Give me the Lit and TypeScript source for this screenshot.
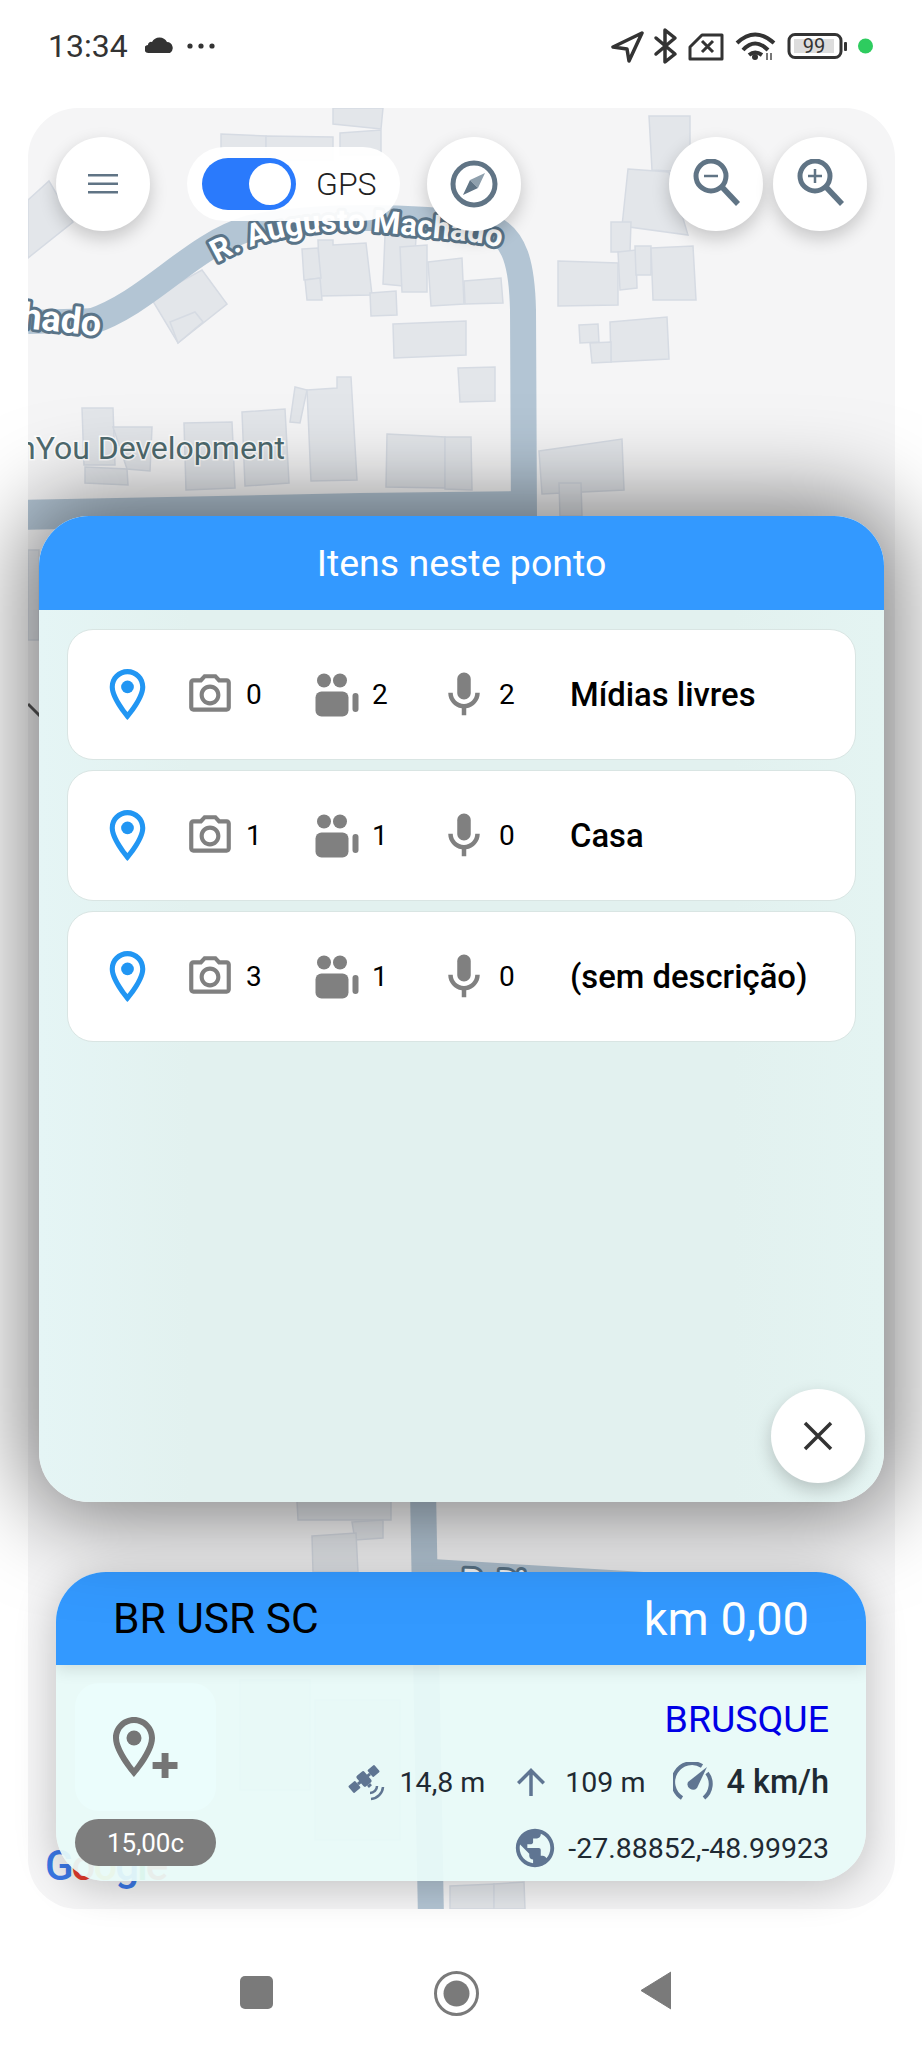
import { LitElement, html, css, svg } from "lit";
import { customElement, property } from "lit/decorators.js";

const PIN =
  "M12 2C8.13 2 5 5.13 5 9c0 5.25 7 13 7 13s7-7.75 7-13c0-3.87-3.13-7-7-7zM7 9c0-2.76 2.24-5 5-5s5 2.24 5 5c0 2.88-2.88 7.19-5 9.88C9.92 16.21 7 11.85 7 9z";

// building footprints, in page coordinates
const BUILDINGS = [
  "333,108 383,108 381,129 333,124",
  "221,134 266,136 266,160 221,160",
  "266,136 333,137 333,160 266,160",
  "340,133 381,130 381,155 340,155",
  "28,200 49,181 73,222 28,258",
  "318,240 333,240 333,245 366,243 372,295 320,296",
  "302,249 318,248 321,278 304,280",
  "305,280 320,278 322,300 307,300",
  "385,235 416,238 413,287 383,284",
  "400,247 427,245 427,292 402,292",
  "428,262 462,258 464,304 431,306",
  "464,281 501,278 503,303 465,304",
  "370,293 396,291 397,315 371,316",
  "393,324 466,321 466,355 394,358",
  "458,368 495,367 495,401 460,402",
  "151,298 202,270 227,304 178,343",
  "170,322 195,312 203,322 178,343",
  "82,408 113,408 115,465 84,465",
  "85,467 127,469 128,485 85,483",
  "113,427 152,427 150,471 127,469",
  "184,423 232,422 235,488 186,490",
  "242,412 285,409 289,483 245,486",
  "290,422 295,387 307,390 300,423",
  "307,390 337,388 337,377 351,377 357,480 311,481",
  "387,434 445,437 445,488 386,487",
  "445,437 471,437 472,490 445,489",
  "539,451 622,439 624,490 542,494",
  "559,483 581,483 582,516 560,516",
  "649,116 690,116 690,172 652,170",
  "628,169 669,172 688,235 622,226",
  "611,222 631,222 630,252 611,252",
  "618,252 636,250 637,288 620,290",
  "635,246 651,246 651,275 636,275",
  "651,248 693,246 696,300 653,300",
  "558,261 618,263 618,305 558,306",
  "610,322 667,317 669,359 611,362",
  "579,325 598,324 599,342 580,343",
  "590,343 611,342 611,362 592,363",
  "28,550 39,550 39,640 28,640",
  "297,1501 391,1501 391,1520 298,1520",
  "352,1522 383,1520 383,1538 355,1540",
  "312,1536 356,1533 358,1572 313,1572",
  "450,1886 494,1884 494,1909 450,1909",
  "494,1884 524,1882 525,1909 494,1909",
  "240,1680 310,1680 310,1790 240,1790",
  "315,1700 400,1700 400,1840 315,1840",
];

const ROWS = [
  { photos: 0, videos: 2, audios: 2, name: "Mídias livres" },
  { photos: 1, videos: 1, audios: 0, name: "Casa" },
  { photos: 3, videos: 1, audios: 0, name: "(sem descrição)" },
];

@customElement("point-row")
export class PointRow extends LitElement {
  static styles = css`
    :host {
      display: grid;
      grid-template-columns: 117px 130px 122px 133px 1fr;
      align-items: center;
      height: 131px;
      box-sizing: border-box;
      background: #fff;
      border: 1px solid #d9e5e3;
      border-radius: 26px;
      font-family: Roboto, sans-serif;
      color: #000;
    }
    .pin {
      width: 61px;
      height: 61px;
      margin-left: 29px;
      fill: #2196f3;
    }
    .cell {
      display: flex;
      align-items: center;
      font-size: 28px;
    }
    .cell svg {
      fill: #808080;
      flex: none;
    }
    .name {
      font-size: 32.8px;
      font-weight: 500;
      white-space: nowrap;
    }
  `;

  @property({ type: Number }) photos = 0;
  @property({ type: Number }) videos = 0;
  @property({ type: Number }) audios = 0;
  @property() name = "";

  render() {
    return html`
      <svg class="pin" viewBox="0 0 24 24"><path d=${PIN}></path><circle cx="12" cy="9" r="2.5"></circle></svg>
      <div class="cell">
        <svg width="50" height="50" viewBox="0 0 24 24" style="margin-right:11px">
          <path d="M14.12 4l1.83 2H20v12H4V6h4.05l1.83-2h4.24M15 2H9L7.17 4H4c-1.1 0-2 .9-2 2v12c0 1.1.9 2 2 2h16c1.1 0 2-.9 2-2V6c0-1.1-.9-2-2-2h-3.17L15 2zm-3 7c1.65 0 3 1.35 3 3s-1.35 3-3 3-3-1.35-3-3 1.35-3 3-3m0-2c-2.76 0-5 2.24-5 5s2.24 5 5 5 5-2.24 5-5-2.24-5-5-5z"></path>
        </svg>
        ${this.photos}
      </div>
      <div class="cell">
        <svg width="44" height="44" viewBox="0 0 44 44" style="margin-right:13px">
          <circle cx="9" cy="7.5" r="7"></circle>
          <circle cx="25" cy="7.5" r="7"></circle>
          <rect x="0.5" y="18.5" width="33" height="25" rx="6"></rect>
          <rect x="37.5" y="20" width="6" height="19" rx="3"></rect>
        </svg>
        ${this.videos}
      </div>
      <div class="cell">
        <svg width="54" height="54" viewBox="0 0 24 24" style="margin-right:8px">
          <path d="M12 14c1.66 0 3-1.34 3-3V5c0-1.66-1.34-3-3-3S9 3.34 9 5v6c0 1.66 1.34 3 3 3z"></path>
          <path d="M17 11c0 2.76-2.24 5-5 5s-5-2.24-5-5H5c0 3.53 2.61 6.43 6 6.92V21h2v-3.08c3.39-.49 6-3.39 6-6.92h-2z"></path>
        </svg>
        ${this.audios}
      </div>
      <div class="name">${this.name}</div>
    `;
  }
}

@customElement("app-root")
export class AppRoot extends LitElement {
  static styles = css`
    :host {
      display: block;
      width: 922px;
      height: 2048px;
      overflow: hidden;
      background: #fff;
      font-family: Roboto, sans-serif;
    }
    .status {
      height: 108px;
      box-sizing: border-box;
      padding: 26px 49px 0 48px;
      display: flex;
      align-items: flex-start;
      color: #333;
    }
    .time {
      font-size: 32px;
      line-height: 40px;
    }
    .cloud {
      margin-left: 17px;
    }
    .more {
      margin-left: 13px;
    }
    .status-right {
      margin-left: auto;
      margin-right: -2px;
    }
    .stage {
      position: relative;
      margin: 0 27px 0 28px;
      height: 1801px;
    }
    .map {
      position: absolute;
      inset: 0;
      border-radius: 50px;
      overflow: hidden;
      background: #f5f5f6;
    }
    .map svg {
      display: block;
    }
    .controls {
      position: absolute;
      top: 29px;
      left: 28px;
      right: 28px;
      display: flex;
      align-items: center;
    }
    .round {
      width: 94px;
      height: 94px;
      border-radius: 50%;
      background: #fff;
      box-shadow: 0 7px 18px rgba(0, 0, 0, 0.2);
      display: flex;
      align-items: center;
      justify-content: center;
      flex: none;
    }
    .gps {
      margin: 0 27px 0 37px;
      width: 213px;
      height: 74px;
      box-sizing: border-box;
      padding-left: 15px;
      border-radius: 37px;
      background: rgba(255, 255, 255, 0.95);
      display: flex;
      align-items: center;
      font-size: 32px;
      font-weight: 300;
      color: #222;
    }
    .track {
      width: 94px;
      height: 52px;
      border-radius: 26px;
      background: #2a7afc;
      display: flex;
      justify-content: flex-end;
      align-items: center;
      padding-right: 5px;
      box-sizing: border-box;
      margin-right: 20px;
    }
    .knob {
      width: 42px;
      height: 42px;
      border-radius: 50%;
      background: #fff;
    }
    .spacer {
      flex: 1;
    }
    .zoom-in {
      margin-left: 10px;
    }
    .panel {
      position: absolute;
      left: 28px;
      top: 1464px;
      width: 810px;
      height: 309px;
      border-radius: 50px;
      overflow: hidden;
      display: flex;
      flex-direction: column;
      background: rgba(232, 250, 248, 0.94);
    }
    .panel-shadow {
      position: absolute;
      left: 28px;
      top: 1464px;
      width: 810px;
      height: 309px;
      border-radius: 50px;
      box-shadow: 0 6px 40px rgba(0, 0, 0, 0.22);
    }
    .panel-head {
      height: 93px;
      flex: none;
      box-sizing: border-box;
      padding: 0 57px;
      display: flex;
      align-items: center;
      justify-content: space-between;
      background: #3399ff;
      box-shadow: 0 4px 16px rgba(0, 0, 0, 0.12);
      position: relative;
    }
    .code {
      font-size: 42.5px;
      color: #000;
    }
    .km {
      font-size: 47px;
      color: #fff;
    }
    .panel-body {
      flex: 1;
      display: flex;
      padding: 18px 37px 14px 19px;
    }
    .side {
      width: 141px;
      display: flex;
      flex-direction: column;
      gap: 8px;
      flex: none;
    }
    .tile {
      height: 128px;
      border-radius: 24px;
      background: #ebfdfc;
      display: flex;
      align-items: center;
      justify-content: center;
    }
    .price {
      height: 47px;
      border-radius: 24px;
      background: #7d7d7d;
      color: #fff;
      font-size: 26px;
      display: flex;
      align-items: center;
      justify-content: center;
    }
    .info {
      flex: 1;
      display: flex;
      flex-direction: column;
      align-items: flex-end;
      color: #1f2a33;
      font-size: 28.5px;
    }
    .city {
      font-size: 37.5px;
      color: #0000e6;
      line-height: 50px;
      height: 50px;
      margin-top: 11px;
    }
    .stats,
    .coords {
      display: flex;
      align-items: center;
    }
    .stats {
      margin-top: 15px;
      height: 46px;
    }
    .coords {
      margin-top: 20px;
      height: 46px;
    }
    .info svg {
      fill: #5f7592;
      flex: none;
    }
    .speed {
      font-size: 32.5px;
      font-weight: 500;
    }
    .dialog {
      position: absolute;
      left: 11px;
      top: 408px;
      width: 845px;
      height: 986px;
      box-sizing: border-box;
      border-radius: 50px;
      background: linear-gradient(to right, #e5f5f5, #e2f1ef 18%, #e2f1ef 82%, #e4f4f2);
      box-shadow: 0 0 90px 14px rgba(0, 0, 0, 0.5);
    }
    .dialog-head {
      height: 94px;
      border-radius: 50px 50px 0 0;
      background: #3399ff;
      color: #fff;
      font-size: 37.5px;
      display: flex;
      align-items: center;
      justify-content: center;
    }
    .rows {
      display: flex;
      flex-direction: column;
      gap: 10px;
      padding: 19px 28px 0;
    }
    .close {
      position: absolute;
      right: 19px;
      bottom: 19px;
    }
    .nav {
      height: 139px;
      box-sizing: border-box;
      padding: 64px 12px 0 0;
      display: flex;
      justify-content: center;
      align-items: flex-start;
      gap: 161px;
    }
    .square {
      width: 33px;
      height: 33px;
      margin-top: 3px;
      border-radius: 5px;
      background: #7a7a7a;
    }
    .home {
      margin-top: -2px;
    }
    .back {
      margin-top: -2px;
    }
  `;

  private renderMap() {
    return html`
      <svg width="867" height="1801" viewBox="28 108 867 1801">
        <defs>
          <path id="street" d="M217 263 C267 234 325 226 397 234 S483 240 517 254"></path>
        </defs>
        <g fill="#e3e6ea" stroke="#d6dbe3" stroke-width="1.5">
          ${BUILDINGS.map((p) => svg`<polygon points=${p}></polygon>`)}
        </g>
        <g fill="none" stroke="#b3c5d4">
          <path stroke-width="26" d="M90 322 C150 302 190 246 250 228 C330 212 440 218 490 227 C515 237 522 265 523 310 L524 520"></path>
          <path stroke-width="30" d="M20 515 L360 508 L524 506"></path>
          <path stroke-width="26" d="M423 1490 L431 1920"></path>
          <path stroke-width="14" d="M432 1566 L660 1580"></path>
          <path stroke-width="24" d="M28 322 L100 320"></path>
          <path stroke-width="3" stroke="#555" d="M28 704 L40 716"></path>
        </g>
        <g font-family="Roboto, sans-serif" font-weight="700" font-size="31" fill="#fff" stroke="#5a7488" stroke-width="6" paint-order="stroke" stroke-linejoin="round">
          <text><textPath href="#street">R. Augusto Machado</textPath></text>
          <text x="100" y="336" font-size="36" text-anchor="end" transform="rotate(6 100 336)">Machado</text>
          <text x="462" y="1590" font-size="30" transform="rotate(2 462 1590)">R. Dig</text>
        </g>
        <text x="285" y="459" text-anchor="end" font-family="Roboto, sans-serif" font-size="32" fill="#4f6b6f" stroke="#fff" stroke-width="3" paint-order="stroke">nYou Development</text>
        <text x="45" y="1880" letter-spacing="-2" font-family="Roboto, sans-serif" font-weight="500" font-size="42">
          <tspan fill="#3b78e7">G</tspan><tspan fill="#e33b2e">o</tspan><tspan fill="#f5bd1f">o</tspan><tspan fill="#3b78e7">g</tspan><tspan fill="#2ca24c">l</tspan><tspan fill="#e33b2e">e</tspan>
        </text>
      </svg>
    `;
  }

  private renderStatus() {
    return html`
      <div class="status">
        <span class="time">13:34</span>
        <svg class="cloud" width="29" height="40" viewBox="0 0 29 40" fill="#333">
          <path d="M4 27a4 4 0 0 1-1-8 3 3 0 0 1 4-3 8.500 8.500 0 0 1 15 0 6 6 0 0 1 3 11z"></path>
        </svg>
        <svg class="more" width="28" height="40" viewBox="0 0 28 40" fill="#333">
          <circle cx="3" cy="20" r="2.600"></circle>
          <circle cx="14" cy="20" r="2.600"></circle>
          <circle cx="25" cy="20" r="2.600"></circle>
        </svg>
        <svg class="status-right" width="264" height="40" viewBox="611 26 264 40" fill="none" stroke="#333" stroke-width="3.500">
          <path stroke-linejoin="round" d="M642 33 L613 47 L627 49 L629 61 Z"></path>
          <path stroke-linecap="round" stroke-linejoin="round" d="M656 38 L675 54 L665 62 V30 L675 38 L656 54"></path>
          <path stroke-linejoin="round" stroke-width="3" d="M690 59 V47 L702 35 H722 V59 Z"></path>
          <path stroke-width="3" d="M702 41 L713 52 M713 41 L702 52"></path>
          <path stroke-width="4" d="M737 43 Q755 26 774 43 M743 50 Q755 37 768 50 M749 55 Q755 50 762 55"></path>
          <circle cx="755" cy="57" r="3" fill="#333" stroke="none"></circle>
          <path stroke-width="2" stroke="#777" d="M767 53 V60 M771 53 V60"></path>
          <rect x="789" y="34.500" width="52" height="23" rx="6" stroke-width="3"></rect>
          <rect x="794" y="39" width="40" height="14" fill="#ddd" stroke="none"></rect>
          <rect x="844" y="42" width="3" height="9" rx="1" fill="#333" stroke="none"></rect>
          <text x="814" y="53" text-anchor="middle" font-family="Roboto, sans-serif" font-size="20" fill="#333" stroke="none">99</text>
          <circle cx="865.500" cy="46" r="7.500" fill="#2ecc5f" stroke="none"></circle>
        </svg>
      </div>
    `;
  }

  private renderControls() {
    const lens = "fill:none;stroke:#607485";
    return html`
      <div class="controls">
        <div class="round">
          <svg width="30" height="22" viewBox="0 0 30 22" fill="#607485">
            <rect y="1" width="30" height="2.500"></rect>
            <rect y="9.500" width="30" height="2.500"></rect>
            <rect y="18" width="30" height="2.500"></rect>
          </svg>
        </div>
        <div class="gps">
          <div class="track"><div class="knob"></div></div>
          GPS
        </div>
        <div class="round">
          <svg width="50" height="50" viewBox="0 0 50 50">
            <circle cx="25" cy="25" r="21" style=${lens} stroke-width="5"></circle>
            <path d="M36 14 L29 29 L21 21 Z" fill="#8fa0ad"></path>
            <path d="M14 36 L21 21 L29 29 Z" fill="#607485"></path>
          </svg>
        </div>
        <div class="spacer"></div>
        <div class="round">
          <svg width="50" height="50" viewBox="0 0 50 50" style="margin-left:2px">
            <circle cx="19" cy="17" r="15" style=${lens} stroke-width="5"></circle>
            <path d="M30 28 L46 45" style=${lens} stroke-width="5.500"></path>
            <path d="M12 17 H26" style=${lens} stroke-width="2.500"></path>
          </svg>
        </div>
        <div class="round zoom-in">
          <svg width="50" height="50" viewBox="0 0 50 50" style="margin-left:2px">
            <circle cx="19" cy="17" r="15" style=${lens} stroke-width="5"></circle>
            <path d="M30 28 L46 45" style=${lens} stroke-width="5.500"></path>
            <path d="M12 17 H26 M19 10 V24" style=${lens} stroke-width="2.500"></path>
          </svg>
        </div>
      </div>
    `;
  }

  private renderPanel() {
    return html`
      <div class="panel-shadow"></div>
      <div class="panel">
        <div class="panel-head">
          <span class="code">BR USR SC</span>
          <span class="km">km 0,00</span>
        </div>
        <div class="panel-body">
          <div class="side">
            <div class="tile">
              <svg width="96" height="72" viewBox="0 0 32 24" fill="#757575">
                <path d=${PIN}></path>
                <circle cx="12" cy="9" r="2.500"></circle>
                <path d="M21.200 14 H23.500 V17 H26.500 V19.300 H23.500 V22.300 H21.200 V19.300 H18.200 V17 H21.200 Z"></path>
              </svg>
            </div>
            <div class="price">15,00c</div>
          </div>
          <div class="info">
            <div class="city">BRUSQUE</div>
            <div class="stats">
              <svg width="40" height="40" viewBox="0 0 40 40" style="margin-right:13px">
                <g transform="rotate(-40 17 17)">
                  <rect x="0" y="12.500" width="9" height="9" rx="1"></rect>
                  <rect x="25" y="12.500" width="9" height="9" rx="1"></rect>
                  <rect x="9" y="15.500" width="16" height="3"></rect>
                  <rect x="12" y="10" width="10" height="14" rx="2"></rect>
                  <rect x="15" y="24" width="4" height="3"></rect>
                </g>
                <path d="M24 37 A13 13 0 0 0 36 25 M23 31 A7 7 0 0 0 30 24" fill="none" stroke="#5f7592" stroke-width="2.500"></path>
              </svg>
              <span>14,8 m</span>
              <svg width="42" height="42" viewBox="0 0 24 24" style="margin:0 13px 0 25px">
                <path d="M4 12l1.410 1.410L11 7.830V20h2V7.830l5.580 5.590L20 12l-8-8-8 8z"></path>
              </svg>
              <span>109 m</span>
              <svg width="40" height="40" viewBox="0 0 40 40" style="margin:0 13px 0 28px">
                <path d="M9 36 A18 18 0 0 1 29 4" fill="none" stroke="#5f7592" stroke-width="4"></path>
                <path d="M34 11 A18 18 0 0 1 31 36" fill="none" stroke="#5f7592" stroke-width="4"></path>
                <path d="M34 5 L24 26 A5.500 5.500 0 0 1 15 20 Z"></path>
              </svg>
              <span class="speed">4 km/h</span>
            </div>
            <div class="coords">
              <svg width="46" height="46" viewBox="0 0 24 24" style="margin-right:10px">
                <path d="M12 2C6.480 2 2 6.480 2 12s4.480 10 10 10 10-4.480 10-10S17.520 2 12 2zm-1 17.930c-3.950-.490-7-3.850-7-7.930 0-.620.080-1.210.210-1.790L9 15v1c0 1.100.900 2 2 2v1.930zm6.900-2.540c-.260-.810-1-1.390-1.900-1.390h-1v-3c0-.550-.450-1-1-1H8v-2h2c.550 0 1-.450 1-1V7h2c1.100 0 2-.900 2-2v-.410c2.930 1.190 5 4.060 5 7.410 0 2.080-.800 3.970-2.100 5.390z"></path>
              </svg>
              <span>-27.88852,-48.99923</span>
            </div>
          </div>
        </div>
      </div>
    `;
  }

  render() {
    return html`
      ${this.renderStatus()}
      <div class="stage">
        <div class="map">${this.renderMap()}</div>
        ${this.renderControls()}
        ${this.renderPanel()}
        <div class="dialog">
          <div class="dialog-head">Itens neste ponto</div>
          <div class="rows">
            ${ROWS.map(
              (r) => html`<point-row .photos=${r.photos} .videos=${r.videos} .audios=${r.audios} .name=${r.name}></point-row>`
            )}
          </div>
          <div class="round close">
            <svg width="30" height="30" viewBox="0 0 30 30" fill="none" stroke="#333" stroke-width="3.500">
              <path d="M2 2 L28 28 M28 2 L2 28"></path>
            </svg>
          </div>
        </div>
      </div>
      <div class="nav">
        <div class="square"></div>
        <svg class="home" width="45" height="45" viewBox="0 0 45 45">
          <circle cx="22.500" cy="22.500" r="21" fill="none" stroke="#7a7a7a" stroke-width="3"></circle>
          <circle cx="22.500" cy="22.500" r="13" fill="#7a7a7a"></circle>
        </svg>
        <svg class="back" width="31" height="39" viewBox="0 0 31 39" fill="#7a7a7a">
          <path d="M31 1 V38 L1 19.500 Z" stroke="#7a7a7a" stroke-linejoin="round"></path>
        </svg>
      </div>
    `;
  }
}
